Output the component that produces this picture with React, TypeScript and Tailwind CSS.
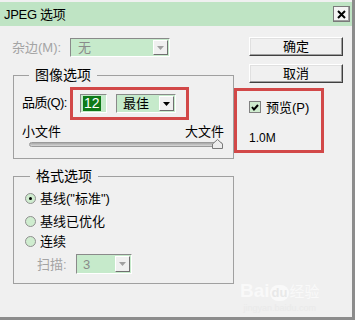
import React from "react";

const font = { fontFamily: '"Liberation Sans", "Noto Sans CJK SC", sans-serif' };

function Arrow({ disabled }: { disabled?: boolean }) {
  return (
    <div className="w-[15px] h-full flex items-center justify-center bg-[#f0f0f0] border-t border-l border-white border-b border-r border-b-[#707070] border-r-[#707070]">
      <svg width="7" height="4" viewBox="0 0 7 4">
        <path d="M0 0 L7 0 L3.5 4 Z" fill={disabled ? "#a0a0a0" : "#000"} />
      </svg>
    </div>
  );
}

function Radio({ checked }: { checked?: boolean }) {
  return (
    <div className="w-[11px] h-[11px] rounded-full border border-[#909090] bg-[#cfeccf] flex items-center justify-center">
      {checked && <div className="w-[3px] h-[3px] rounded-full bg-black" />}
    </div>
  );
}

export default function App() {
  return (
    <div
      style={font}
      className="relative w-[355px] h-[320px] bg-[#f0f0f0] flex flex-col border-r-[3px] border-b-[3px] border-[#8c8c8c] pt-[2px] bg-clip-padding text-[13px] text-black leading-none whitespace-nowrap"
    >
      {/* Title bar */}
      <div className="h-[24px] bg-[#bfe4c4] flex items-center pl-[4px] pr-[2px]">
        <span className="text-[13px] tracking-[-0.3px]">JPEG 选项</span>
        <div className="ml-auto w-[17px] h-[16px] bg-[#f4f4f4] border border-[#7a7a7a] shadow-[inset_-1px_-1px_0_#a0a0a0] flex items-center justify-center">
          <svg width="9" height="9" viewBox="0 0 9 9">
            <path d="M1 1 L8 8 M8 1 L1 8" stroke="#000" strokeWidth="2" />
          </svg>
        </div>
      </div>

      <div className="flex">
        {/* Left column */}
        <div className="ml-[12px] w-[222px] flex flex-col">
          <div className="mt-[12px] h-[19px] flex items-center">
            <span className="w-[58px] text-[#a4a4a4]">杂边(M):</span>
            <div className="w-[100px] h-[19px] flex border border-t-[#8a8a8a] border-l-[#8a8a8a] border-b-white border-r-white bg-[#c6eacb] p-[1px]">
              <span className="flex-1 pl-[6px] flex items-center text-[#8a8a8a]">无</span>
              <Arrow disabled />
            </div>
          </div>

          {/* Group 1 */}
          <div className="relative ml-[1px] mt-[18px] w-[221px] h-[84px] border border-[#a0a0a0] pt-[11px] pl-[8px]">
            <span className="absolute -top-[8px] left-[15px] px-[6px] bg-[#f0f0f0] text-[14px]">图像选项</span>
            <div className="flex items-center h-[33px]">
              <span className="w-[48px] text-[13px] tracking-[-0.6px] -mt-[2px]">品质(Q):</span>
              <div className="w-[119px] h-[33px] border-[3px] border-[#d24848] flex items-center pl-[7px] gap-[9px]">
                <div className="w-[27px] h-[19px] border border-t-[#8a8a8a] border-l-[#8a8a8a] border-b-white border-r-white bg-[#c6eacb] flex items-center pl-[2px]">
                  <span className="bg-[#0e7a18] text-white px-[1px] text-[14px] leading-[15px]">12</span>
                </div>
                <div className="w-[60px] h-[19px] flex border border-t-[#8a8a8a] border-l-[#8a8a8a] border-b-white border-r-white bg-[#c6eacb] p-[1px]">
                  <span className="flex-1 pl-[5px] flex items-center text-[13px]">最佳</span>
                  <Arrow />
                </div>
              </div>
            </div>
            <div className="mt-[4px] flex justify-between pr-[9px] h-[14px] items-center text-[13px]">
              <span>小文件</span>
              <span>大文件</span>
            </div>
            <div className="mt-[1px] ml-[7px] w-[194px] h-[10px] flex items-center relative">
              <div className="w-full h-[5px] rounded-full bg-gradient-to-b from-[#a8a8a8] to-[#d8d8d8] border border-[#9a9a9a]" />
              <svg className="absolute right-0 top-0" width="11" height="10" viewBox="0 0 11 10">
                <path d="M0.5 9.5 L0.5 5 L5.5 0.5 L10.5 5 L10.5 9.5 Z" fill="#ececec" stroke="#7a7a7a" />
              </svg>
            </div>
          </div>

          {/* Group 2 */}
          <div className="relative ml-[1px] mt-[17px] w-[221px] h-[108px] border border-[#a0a0a0] pt-[14px] pl-[11px]">
            <span className="absolute -top-[8px] left-[16px] px-[6px] bg-[#f0f0f0] text-[14px]">格式选项</span>
            <div className="flex flex-col">
              <div className="flex items-center gap-[4px] h-[14px]">
                <Radio checked />
                <span className="text-[13px]">基线("标准")</span>
              </div>
              <div className="flex items-center gap-[4px] h-[14px] mt-[9px]">
                <Radio />
                <span className="text-[13px]">基线已优化</span>
              </div>
              <div className="flex items-center gap-[4px] h-[14px] mt-[6px]">
                <Radio />
                <span className="text-[13px]">连续</span>
              </div>
              <div className="flex items-center ml-[12px] mt-[6px] h-[20px]">
                <span className="w-[39px] text-[#a4a4a4] text-[13px]">扫描:</span>
                <div className="w-[56px] h-[20px] flex border border-t-[#8a8a8a] border-l-[#8a8a8a] border-b-white border-r-white bg-[#c6eacb] p-[1px]">
                  <span className="flex-1 pl-[5px] flex items-center text-[#8a8a8a] text-[13px]">3</span>
                  <Arrow disabled />
                </div>
              </div>
            </div>
          </div>
        </div>

        {/* Right column */}
        <div className="flex flex-col">
          <div className="ml-[15px] mt-[11px] w-[94px] h-[19px] flex items-center justify-center bg-[#f0f0f0] border border-t-white border-l-white border-b-[#404040] border-r-[#404040] shadow-[inset_-1px_-1px_0_#a0a0a0,inset_1px_1px_0_#e0e0e0] text-[13px]">
            确定
          </div>
          <div className="ml-[15px] mt-[8px] w-[94px] h-[19px] flex items-center justify-center bg-[#f0f0f0] border border-t-white border-l-white border-b-[#404040] border-r-[#404040] shadow-[inset_-1px_-1px_0_#a0a0a0,inset_1px_1px_0_#e0e0e0] text-[13px]">
            取消
          </div>
          <div className="mt-[5px] w-[90px] h-[65px] border-[3px] border-[#d24848] pl-[12px] pt-[9px] flex flex-col">
            <div className="flex items-center gap-[5px] h-[14px]">
              <div className="w-[12px] h-[12px] border border-[#808080] bg-[#cfeccf] flex items-center justify-center">
                <svg width="8" height="7" viewBox="0 0 8 7">
                  <path d="M1 3 L3 5.5 L7 1" stroke="#000" strokeWidth="2" fill="none" />
                </svg>
              </div>
              <span className="text-[13px]">预览(P)</span>
            </div>
            <span className="mt-[18px] text-[12px]">1.0M</span>
          </div>
        </div>
      </div>

      {/* Watermark */}
      <div className="absolute left-[240px] top-[281px] flex flex-col items-center text-white opacity-60 pointer-events-none">
        <div className="flex items-end text-[19px] font-bold leading-[20px] h-[20px]">
          <span>Bai</span>
          <span className="text-[13px] leading-[16px] px-[2px] rounded-full bg-white text-[#e4e4e4]">du</span>
          <span className="text-[15px] leading-[18px] font-normal">经验</span>
        </div>
        <span className="mt-[2px] text-[9px] leading-[10px] text-[#e6e6e6]">jingyan.baidu.com</span>
      </div>
    </div>
  );
}
